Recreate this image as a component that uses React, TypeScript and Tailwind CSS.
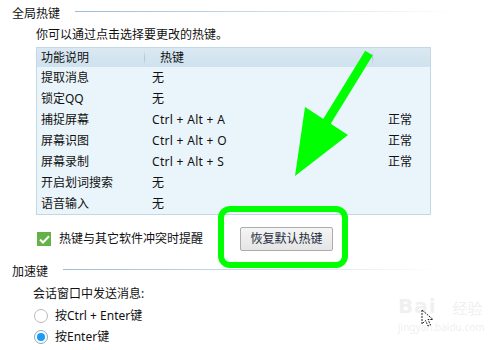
import React from "react";

const rows: [string, string, string][] = [
  ["提取消息", "无", ""],
  ["锁定QQ", "无", ""],
  ["捕捉屏幕", "Ctrl + Alt + A", "正常"],
  ["屏幕识图", "Ctrl + Alt + O", "正常"],
  ["屏幕录制", "Ctrl + Alt + S", "正常"],
  ["开启划词搜索", "无", ""],
  ["语音输入", "无", ""],
];

function SectionTitle({ label, lineClass }: { label: string; lineClass: string }) {
  return (
    <div className="flex items-start h-[20px]">
      <span className="ml-[12px] leading-[20px]">{label}</span>
      <div className={`h-px mt-[7px] bg-gradient-to-r from-[#9dbcd6] via-[#c9dbe8] to-transparent ${lineClass}`} />
    </div>
  );
}

function Radio({ checked, label }: { checked?: boolean; label: string }) {
  return (
    <div className="flex items-center h-[20px] ml-[34px]">
      <span
        className={`w-[14px] h-[14px] rounded-full border flex items-center justify-center bg-white ${
          checked ? "border-[#8aa7bf]" : "border-[#b9b9b9]"
        }`}
      >
        {checked && <span className="w-[8px] h-[8px] rounded-full bg-[#1a9cf2]" />}
      </span>
      <span className="ml-[7px]">{label}</span>
    </div>
  );
}

export default function App() {
  return (
    <div
      className="relative w-[500px] h-[350px] overflow-hidden bg-white text-[12px] text-[#111]"
      style={{ fontFamily: '"Noto Sans", "Noto Sans CJK SC", sans-serif' }}
    >
      <div className="pt-[4px]">
        <SectionTitle label="全局热键" lineClass="ml-[15px] w-[380px]" />
        <div className="ml-[36px] mt-[3px] h-[16px] leading-[16px]">你可以通过点击选择要更改的热键。</div>

        {/* hotkey table */}
        <div className="ml-[36px] mt-[4px] w-[395px] border border-[#c3d7e5] bg-[#eaf5fb]">
          <div className="flex h-[19px] items-center bg-gradient-to-b from-[#dae8f2] to-[#cfe2ee]">
            <div className="w-[108px] pl-[4px] flex items-center justify-between h-full">
              <span>功能说明</span>
              <span className="w-px h-[14px] bg-gradient-to-b from-transparent via-[#a9c4d8] to-transparent" />
            </div>
            <div className="w-[228px] pl-[15px] flex items-center justify-between h-full">
              <span>热键</span>
              <span className="w-px h-[14px] bg-gradient-to-b from-transparent via-[#a9c4d8] to-transparent" />
            </div>
            <div className="flex-1" />
          </div>
          {rows.map(([name, key, status]) => (
            <div key={name} className="flex h-[21px] items-center">
              <div className="w-[108px] pl-[4px]">{name}</div>
              <div className="w-[228px] pl-[7px] tracking-[0.3px]">{key}</div>
              <div className="flex-1 pl-[15px]">{status}</div>
            </div>
          ))}
        </div>

        <div className="flex items-center h-[24px] mt-[12px] ml-[37px]">
          <div className="w-[203px] flex items-center">
            <span className="w-[14px] h-[14px] bg-[#62b247] flex items-center justify-center">
              <svg width="11" height="9" viewBox="0 0 11 9">
                <path d="M1 4.5 L4 7.5 L10 1.2" fill="none" stroke="white" strokeWidth="2" />
              </svg>
            </span>
            <span className="ml-[8px]">热键与其它软件冲突时提醒</span>
          </div>
          <button className="w-[93px] h-[24px] rounded-[2px] border border-[#acacac] bg-gradient-to-b from-[#f5f5f5] to-[#e5e5e5] text-[#1d2c3e]">
            恢复默认热键
          </button>
        </div>

        <div className="mt-[11px]">
          <SectionTitle label="加速键" lineClass="ml-[15px] w-[377px]" />
        </div>
        <div className="ml-[33px] mt-[4px] h-[16px] leading-[16px]">会话窗口中发送消息:</div>
        <div className="mt-[4px]">
          <Radio label="按Ctrl + Enter键" />
        </div>
        <div className="mt-[1px]">
          <Radio checked label="按Enter键" />
        </div>
      </div>

      {/* annotation overlay */}
      <svg className="absolute left-0 top-0 pointer-events-none" width="500" height="350">
        <rect x="221" y="209" width="124" height="56" rx="9" fill="none" stroke="#00ff00" strokeWidth="6" />
        <line x1="369" y1="53" x2="318" y2="136" stroke="#00ff00" strokeWidth="9" />
        <polygon points="305,107 348,135 295,176" fill="#00ff00" />
      </svg>

      {/* watermark */}
      <div className="absolute left-[398px] top-[296px] text-[#f0f0f0] pointer-events-none">
        <div className="flex items-end leading-none">
          <span className="text-[20px] font-bold tracking-[1px]" style={{ fontFamily: '"DejaVu Sans", sans-serif' }}>Bai</span>
          <span className="ml-[16px] text-[15px]">经验</span>
        </div>
        <div className="text-[10px] mt-[4px]">jingyan.baidu.com</div>
      </div>
      <svg className="absolute left-[421px] top-[309px]" width="16" height="20" viewBox="0 0 16 20">
        <path d="M1 1 L1 15 L4.5 11.5 L7 17 L9.5 16 L7 10.5 L12 10.5 Z" fill="white" stroke="#222" strokeWidth="1" strokeDasharray="2 1" />
      </svg>
    </div>
  );
}
